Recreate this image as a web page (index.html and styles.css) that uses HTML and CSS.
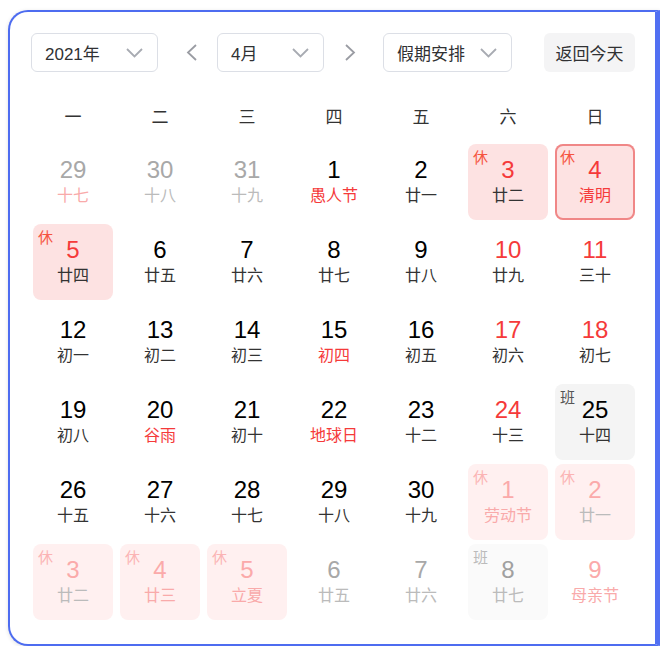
FILE: index.html
```html
<!DOCTYPE html>
<html lang="zh-CN">
<head>
<meta charset="utf-8">
<title>日历</title>
<link rel="stylesheet" href="styles.css">
</head>
<body>
<div class="calendar">
  <div class="header">
    <div class="select sel-year"><span>2021年</span><svg class="chev" width="17" height="10" viewBox="0 0 17 10"><polyline points="1,1 8.5,8.5 16,1" fill="none" stroke="#a8abb2" stroke-width="1.8"/></svg></div>
    <div class="arrow arrow-prev"><svg width="11" height="17" viewBox="0 0 11 17"><polyline points="10,1 2,8.5 10,16" fill="none" stroke="#9a9ca3" stroke-width="1.8"/></svg></div>
    <div class="select sel-month"><span>4月</span><svg class="chev" width="17" height="10" viewBox="0 0 17 10"><polyline points="1,1 8.5,8.5 16,1" fill="none" stroke="#a8abb2" stroke-width="1.8"/></svg></div>
    <div class="arrow arrow-next"><svg width="11" height="17" viewBox="0 0 11 17"><polyline points="1,1 9,8.5 1,16" fill="none" stroke="#9a9ca3" stroke-width="1.8"/></svg></div>
    <div class="select sel-holiday"><span>假期安排</span><svg class="chev" width="17" height="10" viewBox="0 0 17 10"><polyline points="1,1 8.5,8.5 16,1" fill="none" stroke="#a8abb2" stroke-width="1.8"/></svg></div>
    <div class="today-btn">返回今天</div>
  </div>
  <div class="weekdays">
    <span>一</span><span>二</span><span>三</span><span>四</span><span>五</span><span>六</span><span>日</span>
  </div>
  <div class="grid">
    <div class="cell other"><span class="num">29</span><span class="lunar pinkfade">十七</span></div>
    <div class="cell other"><span class="num">30</span><span class="lunar">十八</span></div>
    <div class="cell other"><span class="num">31</span><span class="lunar">十九</span></div>
    <div class="cell"><span class="num">1</span><span class="lunar fest">愚人节</span></div>
    <div class="cell"><span class="num">2</span><span class="lunar">廿一</span></div>
    <div class="cell rest"><span class="tag">休</span><span class="num">3</span><span class="lunar">廿二</span></div>
    <div class="cell rest selected"><span class="tag">休</span><span class="num">4</span><span class="lunar fest">清明</span></div>

    <div class="cell rest"><span class="tag">休</span><span class="num">5</span><span class="lunar">廿四</span></div>
    <div class="cell"><span class="num">6</span><span class="lunar">廿五</span></div>
    <div class="cell"><span class="num">7</span><span class="lunar">廿六</span></div>
    <div class="cell"><span class="num">8</span><span class="lunar">廿七</span></div>
    <div class="cell"><span class="num">9</span><span class="lunar">廿八</span></div>
    <div class="cell weekend"><span class="num">10</span><span class="lunar">廿九</span></div>
    <div class="cell weekend"><span class="num">11</span><span class="lunar">三十</span></div>

    <div class="cell"><span class="num">12</span><span class="lunar">初一</span></div>
    <div class="cell"><span class="num">13</span><span class="lunar">初二</span></div>
    <div class="cell"><span class="num">14</span><span class="lunar">初三</span></div>
    <div class="cell"><span class="num">15</span><span class="lunar fest">初四</span></div>
    <div class="cell"><span class="num">16</span><span class="lunar">初五</span></div>
    <div class="cell weekend"><span class="num">17</span><span class="lunar">初六</span></div>
    <div class="cell weekend"><span class="num">18</span><span class="lunar">初七</span></div>

    <div class="cell"><span class="num">19</span><span class="lunar">初八</span></div>
    <div class="cell"><span class="num">20</span><span class="lunar fest">谷雨</span></div>
    <div class="cell"><span class="num">21</span><span class="lunar">初十</span></div>
    <div class="cell"><span class="num">22</span><span class="lunar fest">地球日</span></div>
    <div class="cell"><span class="num">23</span><span class="lunar">十二</span></div>
    <div class="cell weekend"><span class="num">24</span><span class="lunar">十三</span></div>
    <div class="cell work"><span class="tag">班</span><span class="num">25</span><span class="lunar">十四</span></div>

    <div class="cell"><span class="num">26</span><span class="lunar">十五</span></div>
    <div class="cell"><span class="num">27</span><span class="lunar">十六</span></div>
    <div class="cell"><span class="num">28</span><span class="lunar">十七</span></div>
    <div class="cell"><span class="num">29</span><span class="lunar">十八</span></div>
    <div class="cell"><span class="num">30</span><span class="lunar">十九</span></div>
    <div class="cell other rest"><span class="tag">休</span><span class="num">1</span><span class="lunar pinkfade">劳动节</span></div>
    <div class="cell other rest"><span class="tag">休</span><span class="num">2</span><span class="lunar">廿一</span></div>

    <div class="cell other rest"><span class="tag">休</span><span class="num">3</span><span class="lunar">廿二</span></div>
    <div class="cell other rest"><span class="tag">休</span><span class="num">4</span><span class="lunar pinkfade">廿三</span></div>
    <div class="cell other rest"><span class="tag">休</span><span class="num">5</span><span class="lunar pinkfade">立夏</span></div>
    <div class="cell other"><span class="num">6</span><span class="lunar">廿五</span></div>
    <div class="cell other"><span class="num">7</span><span class="lunar">廿六</span></div>
    <div class="cell other work"><span class="tag">班</span><span class="num">8</span><span class="lunar">廿七</span></div>
    <div class="cell other weekend"><span class="num">9</span><span class="lunar pinkfade">母亲节</span></div>
  </div>
</div>
</body>
</html>
```
FILE: styles.css
```css
html, body {
  margin: 0;
  padding: 0;
  background: #ffffff;
  overflow: hidden;
}
body {
  padding: 10px 0 0 8px;
  font-family: "Liberation Sans", "Noto Sans CJK SC", sans-serif;
  color: #303133;
}
.calendar {
  box-sizing: border-box;
  width: 652px;
  height: 636px;
  border: 2px solid #4d6cf0;
  border-right: 5px solid #5170f2;
  border-radius: 20px 0 0 20px;
  padding: 21px 20px 0 21px;
  background: #fff;
  box-shadow: 0 1px 4px rgba(0, 0, 0, 0.12);
}
.header {
  display: flex;
  align-items: center;
  height: 39px;
}
.select {
  box-sizing: border-box;
  height: 39px;
  border: 1px solid #dcdfe6;
  border-radius: 6px;
  display: flex;
  align-items: center;
  justify-content: space-between;
  padding: 0 14px 0 13px;
  font-size: 17px;
  color: #303133;
}
.sel-year { width: 127px; }
.sel-month { width: 107px; }
.sel-holiday { width: 129px; padding-right: 14px; }
.chev { display: block; }
.arrow {
  display: flex;
  align-items: center;
}
.arrow svg { display: block; }
.arrow-prev { margin: 0 20px 0 28px; }
.arrow-next { margin: 0 27px 0 21px; }
.today-btn {
  margin-left: auto;
  width: 91px;
  height: 39px;
  border-radius: 6px;
  background: #f4f4f5;
  display: flex;
  align-items: center;
  justify-content: center;
  font-size: 17px;
  color: #303133;
}
.weekdays {
  display: grid;
  grid-template-columns: repeat(7, 80px);
  column-gap: 7px;
  margin: 26px 0 0 2px;
  height: 40px;
  line-height: 40px;
  text-align: center;
  font-size: 17px;
  color: #333;
}
.grid {
  display: grid;
  grid-template-columns: repeat(7, 80px);
  grid-auto-rows: 76px;
  column-gap: 7px;
  row-gap: 4px;
  margin: 6px 0 0 2px;
}
.cell {
  position: relative;
  box-sizing: border-box;
  border-radius: 8px;
  display: flex;
  flex-direction: column;
  align-items: center;
  padding-top: 11px;
}
.num {
  font-size: 24px;
  line-height: 30px;
  color: #000;
}
.lunar {
  font-size: 16px;
  line-height: 22px;
  color: #333;
}
.tag {
  position: absolute;
  left: 5px;
  top: 4px;
  font-size: 15px;
  line-height: 20px;
  color: #f5543f;
}
.fest { color: #f53a3a; }
.weekend .num { color: #f53a3a; }
.rest { background: #fde2e2; }
.rest .num { color: #f53a3a; }
.selected { box-shadow: inset 0 0 0 2px #f08787; }
.work { background: #f4f4f4; }
.work .tag { color: #555; }
.work .num { color: #000; }

.other .num { color: #a8a8a8; }
.other .lunar { color: #bbbbbb; }
.other .lunar.pinkfade, .lunar.pinkfade { color: #f9aaaa; }
.other.rest { background: #fff0f0; }
.other.rest .num { color: #fbaaaa; }
.other.rest .tag { color: #fbb4b4; }
.other.work { background: #fafafa; }
.other.work .tag { color: #bbbbbb; }
.other.work .num { color: #a0a0a0; }
.other.weekend .num { color: #fbaaaa; }
```
